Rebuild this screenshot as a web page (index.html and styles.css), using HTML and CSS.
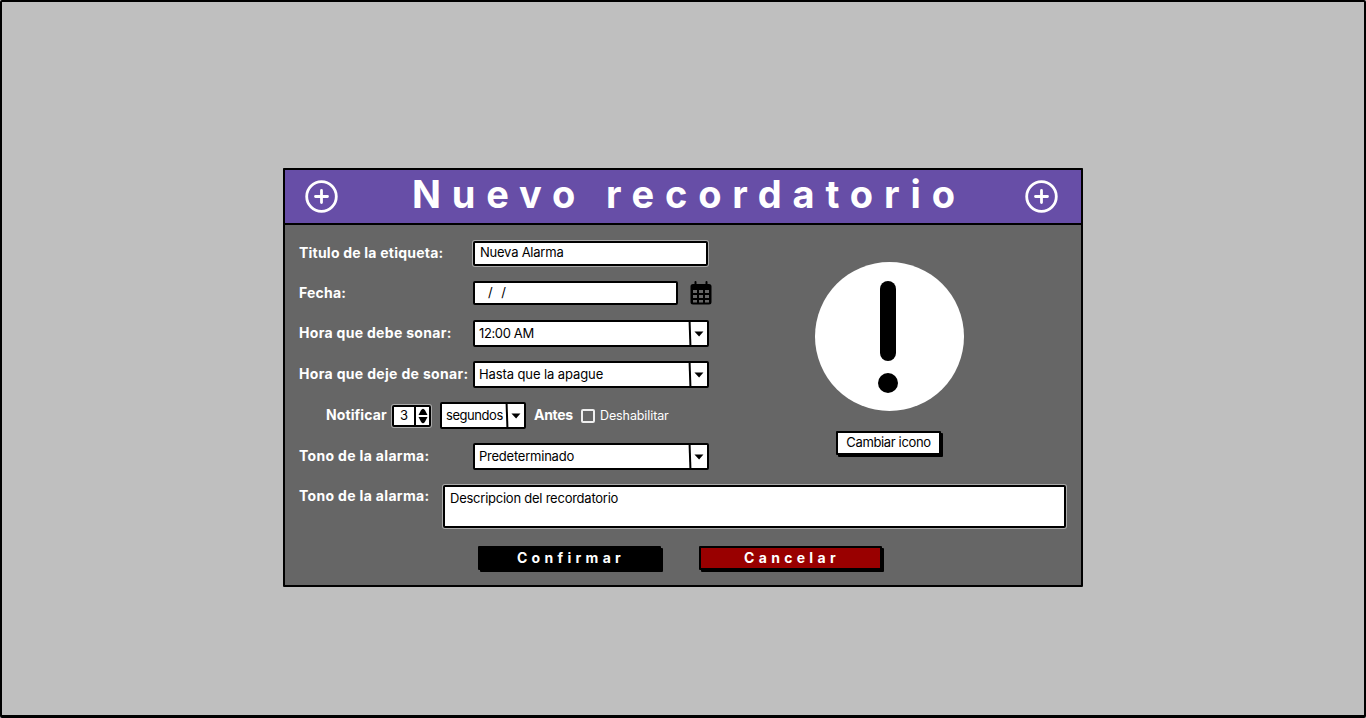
FILE: index.html
```html
<!DOCTYPE html>
<html lang="es">
<head>
<meta charset="utf-8">
<title>Nuevo recordatorio</title>
<link rel="stylesheet" href="styles.css">
</head>
<body>
<main class="screen">
  <section class="dialog">
    <header class="dialog-header">
      <svg class="plus" viewBox="0 0 34 34"><circle cx="17.500" cy="16.500" r="14.8"/><path d="M17.500 10.500v12M11.500 16.500h12"/></svg>
      <h1 class="title">Nuevo recordatorio</h1>
      <svg class="plus" viewBox="0 0 34 34"><circle cx="17.500" cy="16.500" r="14.8"/><path d="M17.500 10.500v12M11.500 16.500h12"/></svg>
    </header>
    <div class="columns">
      <div class="fields">
        <div class="row">
          <span class="label"><span class="l-title">Titulo de la etiqueta:</span></span>
          <div class="box input haloed"><span class="v-title">Nueva Alarma</span></div>
        </div>
        <div class="row">
          <span class="label"><span class="l-date">Fecha:</span></span>
          <div class="box date"><span class="v-date">/&nbsp; /</span></div>
          <svg class="calendar" viewBox="0 0 22 24">
            <path d="M5.500 3.500v-2.500M16.500 3.500v-2.500" stroke="#000" stroke-width="2" stroke-linecap="round"/>
            <path fill-rule="evenodd" d="M3 3h16q2.500 0 2.500 2.500v15.500q0 2.500-2.500 2.500H3Q.5 23.500.5 21V5.500Q.5 3 3 3zM3 9v3h4V9zm6 0v3h4V9zm6 0v3h4V9zM3 14v3h4v-3zm6 0v3h4v-3zm6 0v3h4v-3zM3 19v2.500h4V19zm6 0v2.500h4V19zm6 0v2.500h4V19z"/>
          </svg>
        </div>
        <div class="row">
          <span class="label"><span class="l-start">Hora que debe sonar:</span></span>
          <div class="box combo"><span class="value v-start">12:00 AM</span><span class="arrow"><svg viewBox="0 0 10 6"><path d="M.5.5h9L5 5.500z"/></svg></span></div>
        </div>
        <div class="row">
          <span class="label"><span class="l-end">Hora que deje de sonar:</span></span>
          <div class="box combo"><span class="value v-end">Hasta que la apague</span><span class="arrow"><svg viewBox="0 0 10 6"><path d="M.5.5h9L5 5.500z"/></svg></span></div>
        </div>
        <div class="row notify">
          <span class="label-inline l-notify">Notificar</span>
          <div class="box stepper haloed"><span class="number">3</span><span class="steps"><svg viewBox="0 0 10 16"><path d="M.5 7 3 2.200Q5-.8 7 2.200L9.500 7zM.5 9h9L7 13.800Q5 16.800 3 13.800z"/></svg></span></div>
          <div class="box combo unit"><span class="value v-unit">segundos</span><span class="arrow"><svg viewBox="0 0 10 6"><path d="M.5.5h9L5 5.500z"/></svg></span></div>
          <span class="label-inline l-before">Antes</span>
          <span class="check"></span>
          <span class="l-disable">Deshabilitar</span>
        </div>
        <div class="row">
          <span class="label"><span class="l-tone">Tono de la alarma:</span></span>
          <div class="box combo"><span class="value v-tone">Predeterminado</span><span class="arrow"><svg viewBox="0 0 10 6"><path d="M.5.5h9L5 5.500z"/></svg></span></div>
        </div>
      </div>
      <aside class="icon-panel">
        <svg class="alert" viewBox="0 0 150 150"><circle cx="74.500" cy="74.500" r="74.500" fill="#fff"/><rect x="65" y="19" width="16" height="80" rx="8"/><circle cx="73" cy="121" r="10"/></svg>
        <div class="button small"><span class="v-icon">Cambiar icono</span></div>
      </aside>
    </div>
    <div class="description">
      <span class="label"><span class="l-tone">Tono de la alarma:</span></span>
      <div class="box area haloed"><span class="v-desc">Descripcion del recordatorio</span></div>
    </div>
    <footer class="actions">
      <div class="button confirm"><span class="b-confirm">Confirmar</span></div>
      <div class="button cancel"><span class="b-cancel">Cancelar</span></div>
    </footer>
  </section>
</main>
</body>
</html>
```
FILE: styles.css
```css
* { box-sizing: border-box; }
body { margin: 0; background: #d8d8d8; font-family: Inter, "Open Sans", sans-serif; font-size: 13px; color: #000; }
.screen { width: 1366px; height: 718px; padding: 166px 281px 0; background: #bfbfbf; border: 2px solid #000; border-bottom-width: 3px; border-radius: 2px; }
.dialog { width: 800px; height: 419px; background: #666; border: 2px solid #000; border-radius: 1px; white-space: nowrap; }
.dialog-header { width: 800px; height: 57px; margin: -2px 0 0 -2px; padding: 0 23px 0 19px; display: flex; align-items: center; justify-content: space-between; background: #674ea7; border: 2px solid #000; border-radius: 2px; }
.plus { width: 34px; height: 34px; fill: none; stroke: #fff; stroke-width: 2.800; stroke-linecap: round; }
.title { width: 560px; margin: 0 0 6px 22px; font-size: 38px; line-height: 44px; font-weight: 700; letter-spacing: 10.850px; color: #fff; }
.columns { display: flex; height: 252px; padding-top: 8px; }
.fields { width: 430px; margin-left: 14px; }
.row { height: 40px; display: flex; align-items: center; }
.row:nth-child(n+3) { height: 41px; }
.label { width: 174px; flex: none; }
.label, .label-inline { padding-bottom: 2px; font-size: 14px; font-weight: 700; color: #fff; }
.box { background: #fff; border: 2px solid #000; border-radius: 2px; display: flex; align-items: center; flex: none; }
.box > span:first-child { padding-bottom: 2px; }
.haloed { box-shadow: 0 0 0 1px #aaa; }
.input { width: 235px; height: 25px; padding-left: 5px; }
.date { width: 205px; height: 24px; padding-left: 13px; }
.v-date { letter-spacing: .400px; }
.calendar { width: 22px; height: 24px; margin-left: 12px; }
.combo { width: 236px; height: 27px; padding-left: 4px; }
.value { flex: 1; }
.arrow { width: 18px; height: 100%; border-left: 2px solid #000; display: flex; align-items: center; justify-content: center; transform: skewX(2deg); }
.arrow svg { width: 10px; height: 6px; }
.notify { padding-left: 27px; }
.label-inline { width: 66px; }
.stepper { width: 39px; height: 22px; }
.number { width: 20px; text-align: center; }
.steps { height: 100%; flex: 1; border-left: 2px solid #000; display: flex; align-items: center; justify-content: center; }
.steps svg { width: 10px; height: 16px; }
.unit { width: 86px; margin-left: 9px; }
.label-inline.l-before { width: 47px; margin-left: 8px; letter-spacing: -.300px; }
.check { width: 14px; height: 14px; border: 2px solid #eee; border-radius: 2px; }
.l-disable { margin-left: 5px; font-size: 12.500px; letter-spacing: -.100px; color: #fff; }
.l-title { letter-spacing: .220px; }
.l-date { letter-spacing: .200px; }
.l-start { letter-spacing: .310px; }
.l-end, .l-tone { letter-spacing: .330px; }
.l-notify { letter-spacing: .100px; }
.v-title, .v-tone { letter-spacing: -.230px; }
.v-start { letter-spacing: -.370px; }
.v-end { letter-spacing: -.100px; }
.v-unit { letter-spacing: -.450px; }
.v-desc { letter-spacing: -.240px; }
.v-icon { padding-bottom: 2px; letter-spacing: -.360px; }
.icon-panel { width: 150px; margin: 29px 0 0 86px; display: flex; flex-direction: column; align-items: center; }
.alert { width: 150px; height: 150px; }
.button { display: flex; align-items: center; justify-content: center; border: 2px solid #000; border-radius: 1px; box-shadow: 2px 2px 0 #000; }
.small { width: 105px; height: 24px; margin: 19px 3px 0 0; background: #fff; }
.description { height: 69px; display: flex; padding: 8px 0 0 14px; }
.description .label { width: 144px; padding-top: 2px; }
.area { width: 623px; height: 43px; align-items: flex-start; padding: 3px 0 0 5px; }
.actions { display: flex; gap: 38px; padding-left: 193px; }
.actions .button { width: 183px; height: 24px; font-size: 14px; font-weight: 700; color: #fff; }
.confirm { background: #000; }
.cancel { background: #900; }
.b-confirm, .b-cancel { padding: 0 0 2px 3px; letter-spacing: 4.300px; }
```
